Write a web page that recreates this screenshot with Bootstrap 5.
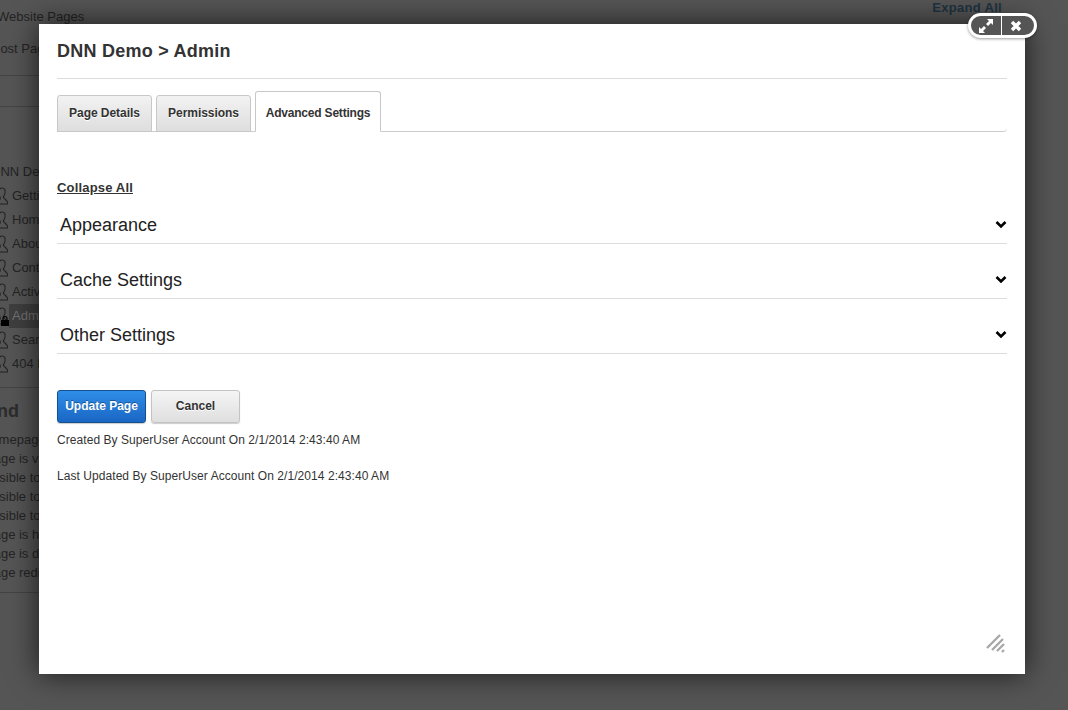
<!DOCTYPE html>
<html lang="en">
<head>
<meta charset="utf-8">
<title>DNN Demo</title>
<link href="https://cdn.jsdelivr.net/npm/bootstrap@5.3.0/dist/css/bootstrap.min.css" rel="stylesheet">
<style>
html,body{height:710px;overflow:hidden}
body{font-family:"Liberation Sans",Arial,sans-serif;background:#555;color:#222;font-size:13px;position:relative}
.bgpage{height:710px;overflow:hidden;position:relative}
.bg-side{width:200px;margin-left:-3px;color:#242424;flex:none}
.bg-main{flex:1;text-align:right;padding-right:66px}
.bg-expand{font-weight:700;font-size:13px;letter-spacing:.3px;color:#1d3340;line-height:15px}
.bg-top{line-height:32px;height:76px;border-bottom:1px solid #444}
.bg-top div:first-child{padding-top:1px}
.bg-host{margin-left:-6px}
.bg-strip{height:31px;border-bottom:1px solid #444}
.bg-tree{margin-top:53px}
.bg-root{line-height:24px;height:24px;margin-left:-6px;white-space:nowrap}
.bg-node{display:flex;align-items:center;height:24px;gap:1px;position:relative;white-space:nowrap}
.bg-man{width:12px;height:18px;flex:none;margin-left:-1px}
.bg-node span{padding:0 3px;line-height:24px}
.bg-node.sel span{background:#3f3f3f;color:#727272;flex:1}
.bg-lock{position:absolute;left:4px;top:12px}
.bg-legend{border-top:1px solid #444;height:206px;border-bottom:1px solid #444;margin-top:11px;padding-top:14px}
.bg-legend h3{font-size:18px;font-weight:700;color:#2c2c2c;margin:0 0 10px -42px;line-height:18px}
.bg-legend div{line-height:19px;margin-left:-12px;white-space:nowrap}
.bg-legend div.bg-vis{margin-left:-9px}
.bg-legend div.bg-homep{margin-left:-15px}
.dlg{position:absolute;left:39px;top:24px;width:986px;height:650px;background:#fff;box-shadow:0 0 28px rgba(0,0,0,.7);padding:0 18px;color:#333}
.dlg-title{font-size:18px;font-weight:700;letter-spacing:.25px;line-height:20px;margin:0;padding:17px 0;border-bottom:1px solid #ddd;color:#333}
.dlg-tabs{margin-top:12px;height:41px;align-items:flex-end;gap:4px;border-bottom:1px solid #ccc;border-bottom-right-radius:4px}
.dlg-tab{display:block;height:37px;margin-bottom:-1px;width:95px;text-align:center;line-height:35px;font-size:12px;font-weight:700;color:#333;letter-spacing:-.04px;text-decoration:none;background:linear-gradient(#f2f2f2,#dedede);border:1px solid #c8c8c8;border-radius:3px 3px 0 0;text-shadow:0 1px 0 #fff}
.dlg-tab.on{width:126px;height:41px;background:#fff;border-bottom-color:#fff;line-height:42px;letter-spacing:-.2px}
.dlg-collapse{display:inline-block;margin-top:48px;font-size:13px;font-weight:700;letter-spacing:.17px;line-height:15px;color:#333;text-decoration:underline}
.dlg-sec{height:55px;border-bottom:1px solid #ddd;padding:0 0 8px 3px;align-items:flex-end;justify-content:space-between;font-size:18px;line-height:20px;color:#222}
.dlg-first{height:46px}
.dlg-chev{margin-bottom:6px}
.dlg-btns{margin-top:36px;gap:5px}
.dlg-btn{width:89px;height:33px;padding:0;border-radius:3px;font-size:12px;font-weight:700;line-height:30px;color:#333;background:linear-gradient(#f5f5f5,#dfdfdf);border:1px solid #c3c3c3;box-shadow:0 1px 1px rgba(0,0,0,.2);text-shadow:0 1px 0 #fff}
.dlg-btn.go{color:#fff;background:linear-gradient(#2f8ee8,#1a66c4);border-color:#14508f;text-shadow:0 -1px 0 rgba(0,0,0,.35)}
.dlg-meta{font-size:12px;letter-spacing:.06px;line-height:14px;color:#333;margin:10px 0 22px}
.dlg-meta+.dlg-meta{margin-top:0}
.dlg-grip{position:absolute;right:18px;bottom:19px}
.dlg-ctl{position:absolute;left:968px;top:13px;width:69px;height:25px;border:3px solid #fff;border-radius:13px;background:#555;box-shadow:0 1px 3px rgba(0,0,0,.4)}
.dlg-ctl i{flex:1;display:flex;align-items:center;justify-content:center;padding-left:1px}
.dlg-ctl i+i{border-left:1px solid #fff;padding:0 4px 0 0}
</style>
</head>
<body>
<div class="bgpage d-flex">
  <div class="bg-side">
    <div class="bg-top"><div>Website Pages</div><div class="bg-host">Host Pages</div></div>
    <div class="bg-strip"></div>
    <div class="bg-tree">
      <div class="bg-root">DNN Demo</div>
      <div class="bg-node"><svg class="bg-man" viewBox="0 0 14 18" preserveAspectRatio="none" fill="none" stroke="#222" stroke-width="1.2"><path d="M7 1c3 0 4 2 3.500 5-.3 2-1.500 3-2 4 1 2 5 3 5.500 7H1c0-2 2-4 4-5 0-2-1-3-1.500-5C3 4 4 1 7 1z"/></svg><span>Getting Started</span></div>
      <div class="bg-node"><svg class="bg-man" viewBox="0 0 14 18" preserveAspectRatio="none" fill="none" stroke="#222" stroke-width="1.2"><path d="M7 1c3 0 4 2 3.500 5-.3 2-1.500 3-2 4 1 2 5 3 5.500 7H1c0-2 2-4 4-5 0-2-1-3-1.500-5C3 4 4 1 7 1z"/></svg><span>Home</span></div>
      <div class="bg-node"><svg class="bg-man" viewBox="0 0 14 18" preserveAspectRatio="none" fill="none" stroke="#222" stroke-width="1.2"><path d="M7 1c3 0 4 2 3.500 5-.3 2-1.500 3-2 4 1 2 5 3 5.500 7H1c0-2 2-4 4-5 0-2-1-3-1.500-5C3 4 4 1 7 1z"/></svg><span>About Us</span></div>
      <div class="bg-node"><svg class="bg-man" viewBox="0 0 14 18" preserveAspectRatio="none" fill="none" stroke="#222" stroke-width="1.2"><path d="M7 1c3 0 4 2 3.500 5-.3 2-1.500 3-2 4 1 2 5 3 5.500 7H1c0-2 2-4 4-5 0-2-1-3-1.500-5C3 4 4 1 7 1z"/></svg><span>Contact Us</span></div>
      <div class="bg-node"><svg class="bg-man" viewBox="0 0 14 18" preserveAspectRatio="none" fill="none" stroke="#222" stroke-width="1.2"><path d="M7 1c3 0 4 2 3.500 5-.3 2-1.500 3-2 4 1 2 5 3 5.500 7H1c0-2 2-4 4-5 0-2-1-3-1.500-5C3 4 4 1 7 1z"/></svg><span>Activity Feed</span></div>
      <div class="bg-node sel"><svg class="bg-man" viewBox="0 0 14 18" preserveAspectRatio="none" fill="none" stroke="#222" stroke-width="1.2"><path d="M7 1c3 0 4 2 3.500 5-.3 2-1.500 3-2 4 1 2 5 3 5.500 7H1c0-2 2-4 4-5 0-2-1-3-1.500-5C3 4 4 1 7 1z"/></svg><span>Admin</span><svg class="bg-lock" width="8" height="10" viewBox="0 0 8 10"><rect x="0" y="4" width="8" height="6" fill="#000"/><path d="M2 4.500V2.500a2 2 0 0 1 4 0v2" fill="none" stroke="#000" stroke-width="1.200"/></svg></div>
      <div class="bg-node"><svg class="bg-man" viewBox="0 0 14 18" preserveAspectRatio="none" fill="none" stroke="#222" stroke-width="1.2"><path d="M7 1c3 0 4 2 3.500 5-.3 2-1.500 3-2 4 1 2 5 3 5.500 7H1c0-2 2-4 4-5 0-2-1-3-1.500-5C3 4 4 1 7 1z"/></svg><span>Search Results</span></div>
      <div class="bg-node"><svg class="bg-man" viewBox="0 0 14 18" preserveAspectRatio="none" fill="none" stroke="#222" stroke-width="1.2"><path d="M7 1c3 0 4 2 3.500 5-.3 2-1.500 3-2 4 1 2 5 3 5.500 7H1c0-2 2-4 4-5 0-2-1-3-1.500-5C3 4 4 1 7 1z"/></svg><span>404 Error Page</span></div>
    </div>
    <div class="bg-legend">
      <h3>Legend</h3>
      <div class="bg-homep">Homepage</div><div>Page is visible</div><div class="bg-vis">Visible to all</div><div class="bg-vis">Visible to users</div><div class="bg-vis">Visible to admins</div><div>Page is hidden</div><div>Page is disabled</div><div>Page redirects</div>
    </div>
  </div>
  <div class="bg-main"><div class="bg-expand">Expand All</div></div>
</div>

<div class="dlg">
  <h1 class="dlg-title">DNN Demo &gt; Admin</h1>
  <div class="dlg-tabs d-flex">
    <a class="dlg-tab" href="#">Page Details</a>
    <a class="dlg-tab" href="#">Permissions</a>
    <a class="dlg-tab on" href="#">Advanced Settings</a>
  </div>
  <a class="dlg-collapse" href="#">Collapse All</a>
  <div class="dlg-sec dlg-first d-flex"><span>Appearance</span><svg class="dlg-chev" width="12" height="9" viewBox="0 0 12 9"><path d="M1.500 2 6 6.500 10.500 2" fill="none" stroke="#000" stroke-width="2.600"/></svg></div>
  <div class="dlg-sec d-flex"><span>Cache Settings</span><svg class="dlg-chev" width="12" height="9" viewBox="0 0 12 9"><path d="M1.500 2 6 6.500 10.500 2" fill="none" stroke="#000" stroke-width="2.600"/></svg></div>
  <div class="dlg-sec d-flex"><span>Other Settings</span><svg class="dlg-chev" width="12" height="9" viewBox="0 0 12 9"><path d="M1.500 2 6 6.500 10.500 2" fill="none" stroke="#000" stroke-width="2.600"/></svg></div>
  <div class="dlg-btns d-flex">
    <button class="dlg-btn go" type="button">Update Page</button>
    <button class="dlg-btn" type="button">Cancel</button>
  </div>
  <div class="dlg-meta">Created By SuperUser Account On 2/1/2014 2:43:40 AM</div>
  <div class="dlg-meta">Last Updated By SuperUser Account On 2/1/2014 2:43:40 AM</div>
  <svg class="dlg-grip" width="22" height="22" viewBox="0 0 22 22" stroke="#a8a8a8" stroke-width="2.400"><path d="M2 15 15 2M7 17 18 6M12 18l7-7M17 19l2-2"/></svg>
</div>
<div class="dlg-ctl d-flex">
  <i><svg width="14" height="14" viewBox="0 0 14 14" fill="#fff"><path d="M14 0v6l-2-2-3 3-2-2 3-3-2-2zM0 14V8l2 2 3-3 2 2-3 3 2 2z"/></svg></i>
  <i><svg width="12" height="12" viewBox="0 0 12 12" fill="none" stroke="#fff" stroke-width="3.400"><path d="M2 2l8 8M10 2l-8 8"/></svg></i>
</div>
<script src="https://cdn.jsdelivr.net/npm/bootstrap@5.3.0/dist/js/bootstrap.bundle.min.js"></script>
</body>
</html>
